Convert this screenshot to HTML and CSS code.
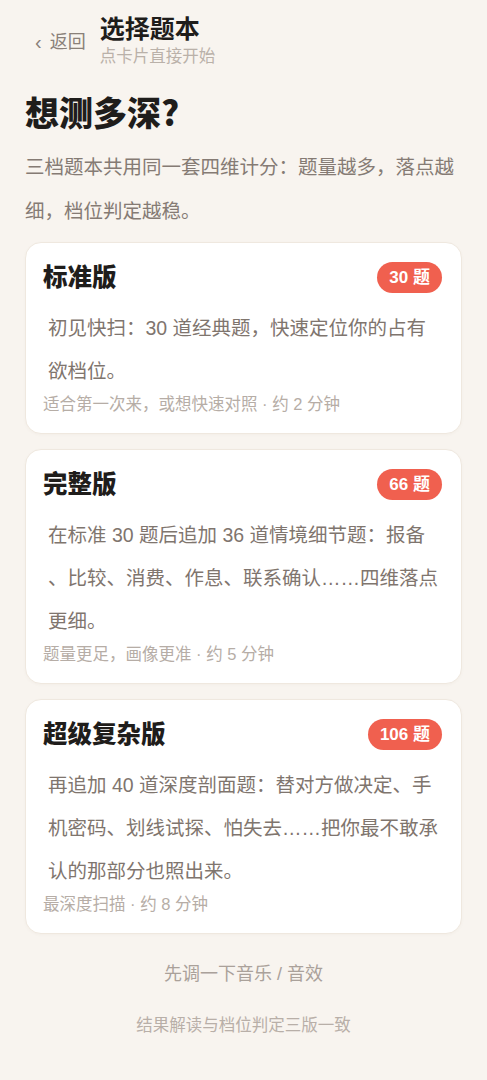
FILE: index.html
```html
<!DOCTYPE html>
<html lang="zh-CN">
<head>
<meta charset="utf-8">
<title>选择题本</title>
<link rel="stylesheet" href="styles.css">
</head>
<body>
<div class="page">
  <header class="topbar">
    <div class="back"><span class="chev">‹</span>返回</div>
    <div class="titles">
      <div class="title">选择题本</div>
      <div class="subtitle">点卡片直接开始</div>
    </div>
  </header>

  <h1 class="heading">想测多深?</h1>
  <p class="intro">三档题本共用同一套四维计分：题量越多，落点越细，档位判定越稳。</p>

  <div class="cards">
    <div class="card">
      <div class="card-head">
        <div class="card-title">标准版</div>
        <div class="badge">30 题</div>
      </div>
      <p class="desc">初见快扫：30 道经典题，快速定位你的占有欲档位。</p>
      <div class="meta">适合第一次来，或想快速对照 · 约 2 分钟</div>
    </div>

    <div class="card">
      <div class="card-head">
        <div class="card-title">完整版</div>
        <div class="badge">66 题</div>
      </div>
      <p class="desc">在标准 30 题后追加 36 道情境细节题：报备、比较、消费、作息、联系确认……四维落点更细。</p>
      <div class="meta">题量更足，画像更准 · 约 5 分钟</div>
    </div>

    <div class="card">
      <div class="card-head">
        <div class="card-title">超级复杂版</div>
        <div class="badge">106 题</div>
      </div>
      <p class="desc">再追加 40 道深度剖面题：替对方做决定、手机密码、划线试探、怕失去……把你最不敢承认的那部分也照出来。</p>
      <div class="meta">最深度扫描 · 约 8 分钟</div>
    </div>
  </div>

  <div class="music">先调一下音乐 / 音效</div>
  <div class="note">结果解读与档位判定三版一致</div>
</div>
</body>
</html>
```

FILE: styles.css
```css
* { box-sizing: border-box; }
html, body {
  margin: 0;
  padding: 0;
  background: #f8f4ef;
}
body {
  font-family: "Liberation Sans", "Noto Sans CJK SC", sans-serif;
  color: #222;
}
.page {
  padding: 13px 25px 40px 25px;
}
.topbar {
  display: flex;
  align-items: center;
  gap: 14px;
}
.back {
  display: flex;
  align-items: center;
  padding-left: 10px;
  font-size: 18px;
  color: #8a8079;
  line-height: 22px;
  margin-top: 3px;
}
.chev {
  font-size: 20px;
  margin-right: 8px;
  color: #8a8079;
}
.titles {
  display: flex;
  flex-direction: column;
}
.title {
  font-size: 25px;
  font-weight: 700;
  line-height: 32px;
  color: #1f1d1b;
}
.subtitle {
  font-size: 16.5px;
  line-height: 22px;
  color: #bab1a9;
}
.heading {
  margin: 23px 0 0 0;
  font-family: "Noto Sans CJK SC", sans-serif;
  font-size: 34px;
  font-weight: 900;
  line-height: 44px;
  color: #1f1d1b;
}
.intro {
  margin: 11px 0 0 0;
  font-size: 19.5px;
  line-height: 44px;
  color: #857b74;
}
.cards {
  margin-top: 9px;
  display: flex;
  flex-direction: column;
  gap: 15px;
}
.card {
  background: #fff;
  border: 1px solid #efe8df;
  border-radius: 16px;
  padding: 19px 19px 18px 17px;
  box-shadow: 0 1px 3px rgba(120, 100, 80, 0.04);
}
.card-head {
  display: flex;
  align-items: center;
  justify-content: space-between;
  height: 31px;
}
.card-title {
  font-size: 24.5px;
  font-weight: 900;
  color: #1f1d1b;
  line-height: 31px;
}
.badge {
  height: 31px;
  padding: 0 12px;
  border-radius: 16px;
  background: #f0604f;
  color: #fff;
  font-size: 17px;
  font-weight: 700;
  line-height: 31px;
}
.desc {
  margin: 14px 0 0 0;
  padding-left: 5px;
  font-size: 19.5px;
  line-height: 43px;
  color: #7f756e;
  line-break: anywhere;
}
.meta {
  font-size: 16.5px;
  line-height: 22px;
  color: #b6ada6;
}
.music {
  margin-top: 28px;
  text-align: center;
  font-size: 18px;
  line-height: 24px;
  color: #aaa19a;
}
.note {
  margin-top: 28px;
  text-align: center;
  font-size: 16.5px;
  line-height: 22px;
  color: #b8afa8;
}
```
